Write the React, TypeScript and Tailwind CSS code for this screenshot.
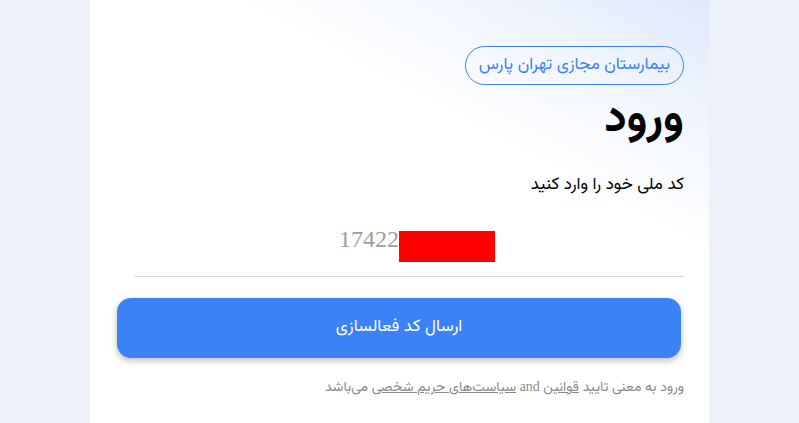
export default function App() {
  return (
    <div
      dir="rtl"
      className="w-full h-[423px] overflow-hidden bg-[#edf1fa] flex justify-center"
      style={{ fontFamily: '"Vazirmatn", "Noto Sans Arabic", "Noto Naskh Arabic", "DejaVu Sans", sans-serif' }}
    >
      <div className="w-[619px] h-full bg-[linear-gradient(208deg,#dfe9fc_0%,#f0f5fd_16%,#ffffff_34%)] pt-[46px] px-[25px]">
        <div className="flex">
          <span className="h-[39px] px-[13px] flex items-center rounded-full border border-[#3b82f6] text-[#3b82f6] text-[17px]">
            بیمارستان مجازی تهران پارس
          </span>
        </div>
        <h1 className="mt-[8px] text-[45px] leading-[54px] font-bold text-black">ورود</h1>
        <p className="mt-[26px] text-[17px] leading-[24px] text-black">کد ملی خود را وارد کنید</p>
        <div className="mt-[18px] ml-[19px] border-b border-[#d9d9d9] h-[62px] flex items-start justify-center pl-[16px] pt-[9px]">
          <div dir="ltr" className="flex items-start">
            <span className="text-[24px] leading-[30px] text-[#9e9e9e]" style={{ fontFamily: '"Liberation Serif", serif' }}>
              17422
            </span>
            <span className="mt-[7px] w-[96px] h-[31px] bg-[#ff0000]" />
          </div>
        </div>
        <button className="mt-[21px] mr-[3px] w-[564px] h-[60px] rounded-[14px] bg-[#3b82f6] text-white text-[17px] shadow-[0_3px_6px_rgba(0,0,0,0.25)]">
          ارسال کد فعالسازی
        </button>
        <p className="mt-[18px] text-[14px] text-[#8a8a8a]">
          ورود به معنی تایید <span className="underline">قوانین</span>
          <span style={{ fontFamily: '"Liberation Serif", serif' }}> and </span>
          <span className="underline">سیاست‌های حریم شخصی</span> می‌باشد
        </p>
      </div>
    </div>
  );
}
